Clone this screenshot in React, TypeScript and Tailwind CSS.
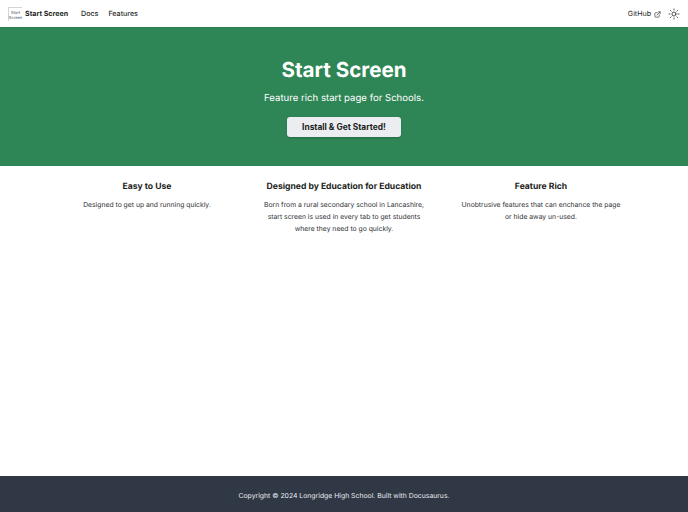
import { Sun, ExternalLink } from 'lucide-react';

const features = [
  {
    title: 'Easy to Use',
    lines: ['Designed to get up and running quickly.'],
  },
  {
    title: 'Designed by Education for Education',
    lines: [
      'Born from a rural secondary school in Lancashire,',
      'start screen is used in every tab to get students',
      'where they need to go quickly.',
    ],
  },
  {
    title: 'Feature Rich',
    lines: ['Unobtrusive features that can enchance the page', 'or hide away un-used.'],
  },
];

const Logo = () => (
  <div className="w-[14px] h-[14px] border-t border-l border-gray-300 flex flex-col items-center justify-center text-[4px] leading-[5px] text-gray-500">
    <span>Start</span>
    <span>Screen</span>
  </div>
);

export default function App() {
  return (
    <div className="h-[512px] flex flex-col bg-white text-[#1c1e21] font-['Inter',sans-serif] antialiased [text-rendering:geometricPrecision]">
      <nav className="h-[27px] shrink-0 flex items-center justify-between pl-2 pr-[8px] pt-[1px] text-[7.1px] font-medium shadow-[0_1px_1px_rgba(0,0,0,0.04)] relative z-10">
        <div className="flex items-center">
          <Logo />
          <span className="ml-[3px] font-bold">Start Screen</span>
          <span className="ml-[13px]">Docs</span>
          <span className="ml-[10px]">Features</span>
        </div>
        <div className="flex items-center">
          <span className="font-normal">GitHub</span>
          <ExternalLink className="ml-[3px] w-[7px] h-[7px]" strokeWidth={2} />
          <Sun className="ml-[7px] w-[12px] h-[12px]" strokeWidth={1.5} />
        </div>
      </nav>

      <header className="h-[139px] shrink-0 bg-[#2e8555] text-white flex flex-col items-center">
        <h1 className="mt-[28px] text-[20.6px] leading-[29px] font-bold">Start Screen</h1>
        <p className="mt-[7px] text-[9.6px] leading-[16px]">Feature rich start page for Schools.</p>
        <button className="mt-[10px] w-[114px] h-[20px] rounded-[3px] bg-[#ebedf0] text-[#1c1e21] text-[8.4px] font-bold shadow-[0_1px_2px_rgba(0,0,0,0.2)]">
          Install &amp; Get Started!
        </button>
      </header>

      <main className="grow flex justify-center pt-[15px] px-[48.5px]">
        {features.map((f) => (
          <div key={f.title} className="flex-1 text-center">
            <h3 className="text-[8.6px] leading-[13px] font-bold">{f.title}</h3>
            <div className="mt-[5px] text-[6.8px] leading-[12px] text-[#2f3134]">
              {f.lines.map((l) => (
                <p key={l}>{l}</p>
              ))}
            </div>
          </div>
        ))}
      </main>

      <footer className="h-[36px] shrink-0 bg-[#303846] text-[#ebedf0] text-[6.85px] flex items-center justify-center pt-[4px]">
        Copyright © 2024 Longridge High School. Built with Docusaurus.
      </footer>
    </div>
  );
}
